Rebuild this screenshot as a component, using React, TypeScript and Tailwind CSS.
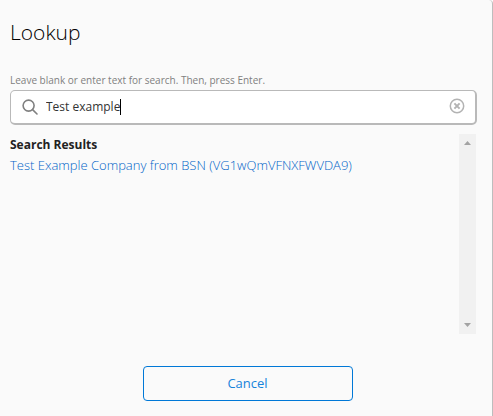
import { useState } from 'react';

const results = [{ id: 'VG1wQmVFNXFWVDA9', name: 'Test Example Company from BSN' }];

function SearchIcon() {
  return (
    <svg width="16" height="16" viewBox="0 0 16 16" fill="none" stroke="#808080" strokeWidth="1.6" aria-hidden="true">
      <circle cx="6.6" cy="6.6" r="5.5" />
      <path d="M10.6 10.6 L15 15" strokeLinecap="round" />
    </svg>
  );
}

function ClearIcon() {
  return (
    <svg width="16" height="16" viewBox="0 0 16 16" fill="none" stroke="#b3b3b3" aria-hidden="true">
      <circle cx="8" cy="8" r="6.7" strokeWidth="1.5" />
      <path d="M5.4 5.4 L10.6 10.6 M10.6 5.4 L5.4 10.6" strokeWidth="2" />
    </svg>
  );
}

export default function App() {
  const [query, setQuery] = useState('Test example');

  return (
    <main className="flex min-h-screen flex-col rounded-tr-sm border-r border-[#bdbdbd] bg-[#fafafa] pr-[15px] pb-4 pl-2.5 pt-4 font-['Open_Sans','Noto_Sans',sans-serif] text-[#333]">
      <h1 className="text-[21px] leading-8 font-light text-black">Lookup</h1>

      <label htmlFor="lookup" className="mt-6 text-[10px] leading-4 text-[#808080]">
        Leave blank or enter text for search. Then, press Enter.
      </label>
      <div className="relative mt-0.5 flex h-[35px] items-center rounded-[5px] border border-r-2 border-b-2 border-[#b9b9b9] bg-white pr-2.5 pl-[11px]">
        <SearchIcon />
        <div className="relative ml-2 flex-1">
          <input
            id="lookup"
            type="text"
            value={query}
            onChange={(e) => setQuery(e.target.value)}
            className="block w-full bg-transparent text-[12px] leading-5 caret-transparent outline-none"
          />
          {/* Caret follows the typed text */}
          <div className="pointer-events-none absolute inset-0 flex items-center text-[12px]" aria-hidden="true">
            <span className="invisible whitespace-pre">{query}</span>
            <span className="h-4 w-px bg-black" />
          </div>
        </div>
        <button type="button" aria-label="Clear search" className="flex pb-0.5" onClick={() => setQuery('')}>
          <ClearIcon />
        </button>
      </div>

      <section className="mt-[9px] mr-px flex h-[200px] justify-between">
        <div>
          <h2 className="text-[12px] leading-[22px] font-bold text-[#222]">Search Results</h2>
          <ul>
            {results.map((r) => (
              <li key={r.id} className="text-[13px] leading-[18px] font-light">
                <a href="#" className="text-[#0064c8]">
                  {r.name} ({r.id})
                </a>
              </li>
            ))}
          </ul>
        </div>
        {/* Scroll track */}
        <div className="flex w-[17px] flex-col items-center justify-between bg-[#f1f1f1] py-[7px]">
          <svg width="7" height="4" viewBox="0 0 7 4" fill="#a3a3a3" aria-hidden="true">
            <path d="M3.5 0 L7 4 H0 Z" />
          </svg>
          <svg width="7" height="4" viewBox="0 0 7 4" fill="#a3a3a3" aria-hidden="true">
            <path d="M0 0 H7 L3.5 4 Z" />
          </svg>
        </div>
      </section>

      <button
        type="button"
        className="mt-8 ml-2 h-[35px] w-[210px] self-center rounded-sm border border-[#0078d7] text-[13px] text-[#1683da]"
      >
        Cancel
      </button>
    </main>
  );
}
